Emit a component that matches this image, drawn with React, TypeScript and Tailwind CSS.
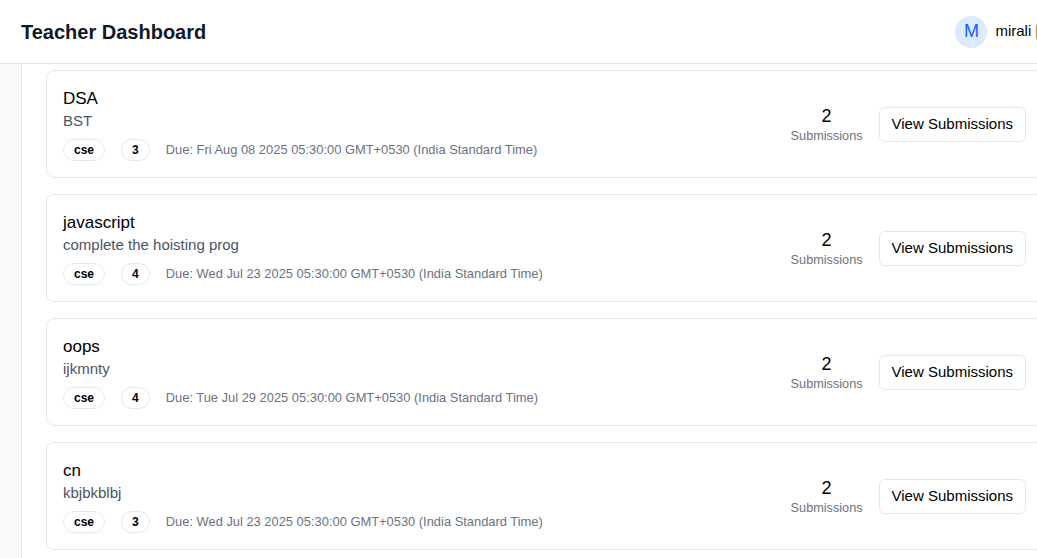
import React from "react";

type Assignment = {
  title: string;
  description: string;
  branch: string;
  semester: number;
  due: string;
  submissions: number;
};

const assignments: Assignment[] = [
  {
    title: "DSA",
    description: "BST",
    branch: "cse",
    semester: 3,
    due: "Fri Aug 08 2025 05:30:00 GMT+0530 (India Standard Time)",
    submissions: 2,
  },
  {
    title: "javascript",
    description: "complete the hoisting prog",
    branch: "cse",
    semester: 4,
    due: "Wed Jul 23 2025 05:30:00 GMT+0530 (India Standard Time)",
    submissions: 2,
  },
  {
    title: "oops",
    description: "ijkmnty",
    branch: "cse",
    semester: 4,
    due: "Tue Jul 29 2025 05:30:00 GMT+0530 (India Standard Time)",
    submissions: 2,
  },
  {
    title: "cn",
    description: "kbjbkblbj",
    branch: "cse",
    semester: 3,
    due: "Wed Jul 23 2025 05:30:00 GMT+0530 (India Standard Time)",
    submissions: 2,
  },
];

function Badge({ children }: { children: React.ReactNode }) {
  return (
    <span className="inline-flex h-[22px] items-center rounded-full border border-gray-200 px-[10px] text-[12px] font-bold text-black">
      {children}
    </span>
  );
}

function AssignmentCard({ a }: { a: Assignment }) {
  return (
    <div className="flex items-center rounded-lg border border-gray-200 bg-white pt-4 pb-4 pl-4 pr-[15px]">
      <div className="flex-1">
        <h3 className="text-[17px] leading-6 text-black">{a.title}</h3>
        <p className="text-[15px] leading-5 text-gray-600">{a.description}</p>
        <div className="mt-2 flex items-center gap-4">
          <Badge>{a.branch}</Badge>
          <Badge>{a.semester}</Badge>
          <span className="text-[12.9px] text-gray-500">Due: {a.due}</span>
        </div>
      </div>
      <div className="flex items-center gap-4">
        <div className="flex flex-col items-center">
          <span className="text-[18px] leading-6 text-black">{a.submissions}</span>
          <span className="text-[12.7px] leading-4 text-gray-500">Submissions</span>
        </div>
        <button className="h-[35px] rounded-md border border-gray-200 bg-white px-3 text-[15px] text-black">
          View Submissions
        </button>
      </div>
    </div>
  );
}

export default function App() {
  return (
    <div
      className="h-[558px] w-[1037px] overflow-hidden bg-white"
      style={{ fontFamily: '"Liberation Sans", Arial, sans-serif' }}
    >
      <header className="flex h-[64px] w-[1118px] items-center border-b border-gray-200 bg-white px-[21px]">
        <h1 className="text-[20px] font-bold text-gray-900">Teacher Dashboard</h1>
        <div className="ml-auto flex items-center">
          <div className="flex h-8 w-8 items-center justify-center rounded-full bg-blue-100 text-[18px] text-blue-600">
            M
          </div>
          <span className="ml-2 text-[15px] text-black">mirali</span>
          <button className="ml-[5px] h-[18px] rounded bg-orange-400 px-3 text-xs leading-[18px] text-white">
            Logout
          </button>
        </div>
      </header>
      <div className="flex h-[494px] w-[1066px]">
        <aside className="w-[22px] shrink-0 border-r border-gray-200 bg-gray-50" />
        <main className="flex-1 space-y-4 px-6 pt-[6px]">
          {assignments.map((a) => (
            <AssignmentCard key={a.title} a={a} />
          ))}
        </main>
      </div>
    </div>
  );
}
